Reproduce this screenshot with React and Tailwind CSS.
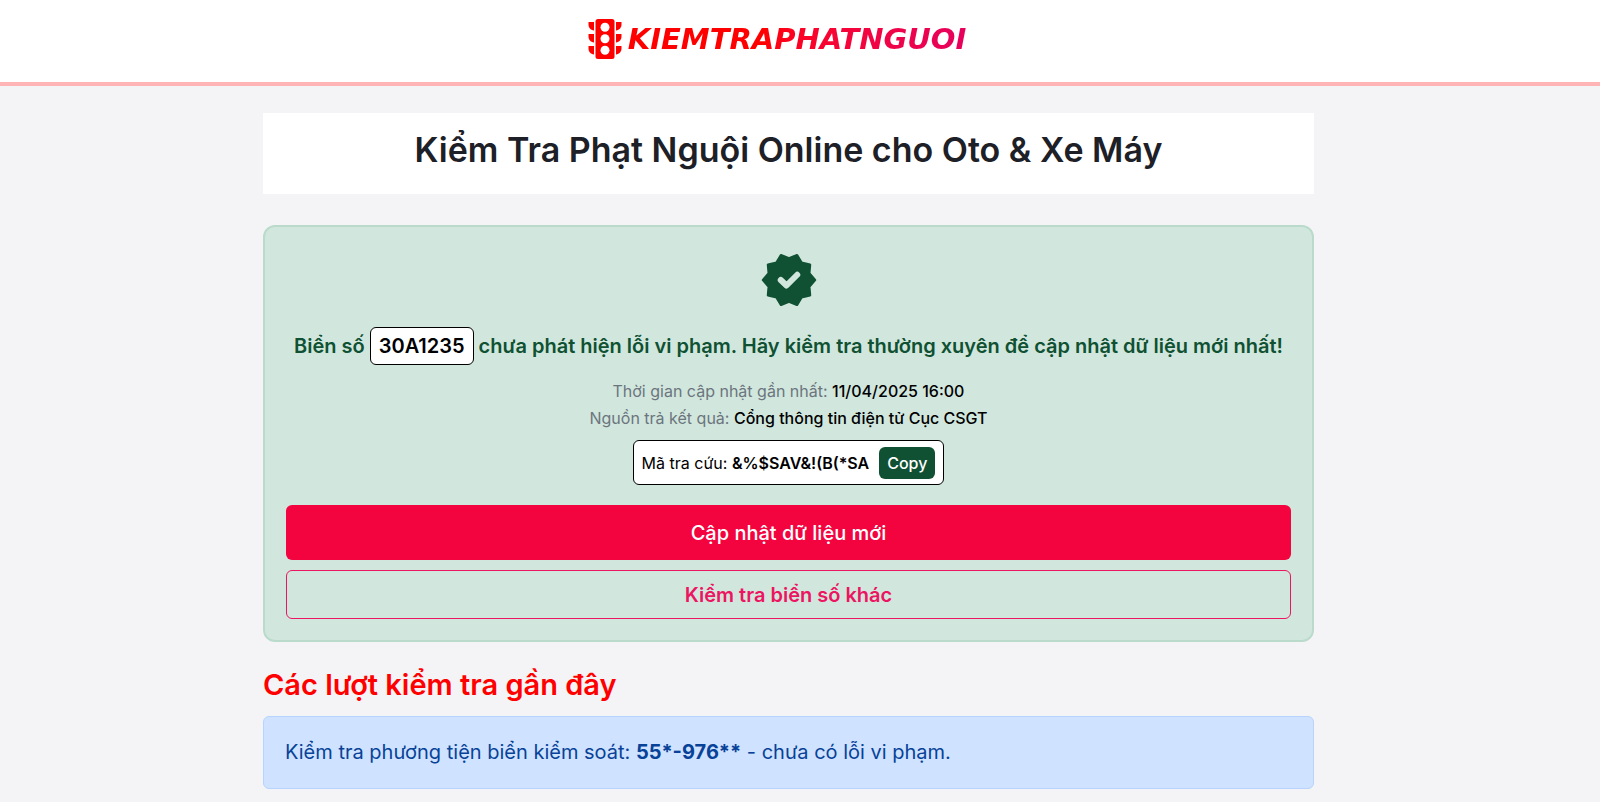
import { useState } from 'react';

const result = {
  plate: '30A1235',
  updatedAt: '11/04/2025 16:00',
  source: 'Cổng thông tin điện tử Cục CSGT',
  code: '&%$SAV&!(B(*SA',
};

const recentChecks = [{ plate: '55*-976**', status: 'chưa có lỗi vi phạm.' }];

function TrafficLight() {
  return (
    <svg viewBox="0 0 34 42" className="h-[42px] w-[34px]" aria-hidden="true">
      <g fill="#ff0000">
        <rect x="7.5" y="1" width="19" height="40" rx="2.5" />
        <path d="M.5 4H6v8.500C2.500 12 .5 9.500.5 6.500zM.5 16H6v8.500C2.500 24 .5 21.500.5 18.500zM.5 28H6v8.500C2.500 36 .5 33.500.5 30.500z" />
        <path d="M33.500 4H28v8.500c3.500-.5 5.500-3 5.500-6zM33.500 16H28v8.500c3.500-.5 5.500-3 5.500-6zM33.500 28H28v8.500c3.500-.5 5.500-3 5.500-6z" />
      </g>
      <g fill="#ffffff">
        <circle cx="17" cy="9.200" r="4.500" />
        <circle cx="17" cy="20.700" r="4.500" />
        <circle cx="17" cy="32.200" r="4.500" />
      </g>
    </svg>
  );
}

function VerifiedBadge() {
  return (
    <svg viewBox="0 0 24 24" className="mx-auto size-[60px]" aria-hidden="true">
      <path
        d="M22.400 12l-2.300-2.700.3-3.400-3.400-.8-1.800-3L12 3.400 8.800 2.100 7 5.100l-3.400.8.3 3.400L1.600 12l2.300 2.700-.3 3.400 3.400.8 1.800 3 3.200-1.300 3.200 1.300 1.800-3 3.400-.8-.3-3.400z"
        fill="#0f5132"
        stroke="#0f5132"
        strokeWidth="1"
        strokeLinejoin="round"
      />
      <path
        d="M8.700 12l2.300 2.200 4.300-4.300"
        fill="none"
        stroke="#d1e7dd"
        strokeWidth="2.400"
        strokeLinecap="round"
        strokeLinejoin="round"
      />
    </svg>
  );
}

function ResultCard() {
  const [copied, setCopied] = useState(false);

  const handleCopy = () => {
    navigator.clipboard?.writeText(result.code);
    setCopied(true);
  };

  return (
    <section className="mt-[31px] rounded-xl border-2 border-[#badbcc] bg-[#d1e7dd] px-[21px] pt-[23px] pb-[21px] text-center">
      <VerifiedBadge />

      <p className="mt-4 text-[20px] leading-[40px] font-semibold text-[#0f5132]">
        Biển số{' '}
        <span className="inline-block rounded-md border border-black bg-white px-2 leading-9 text-black">
          {result.plate}
        </span>{' '}
        chưa phát hiện lỗi vi phạm. Hãy kiểm tra thường xuyên để cập nhật dữ liệu mới nhất!
      </p>

      <div className="mt-3 text-[16px] leading-[27px] text-[#6c757d]">
        <p>
          Thời gian cập nhật gần nhất: <span className="font-medium text-black">{result.updatedAt}</span>
        </p>
        <p>
          Nguồn trả kết quả: <span className="font-medium text-black">{result.source}</span>
        </p>
      </div>

      <div className="mt-2 inline-flex h-[45px] items-center rounded-md border border-black bg-white px-2 text-[16px] text-black">
        <span>
          Mã tra cứu: <strong className="font-semibold">{result.code}</strong>
        </span>
        <button
          type="button"
          onClick={handleCopy}
          className="ml-[10px] h-8 rounded-md bg-[#0f5132] px-2 font-medium text-white"
        >
          {copied ? 'Copied' : 'Copy'}
        </button>
      </div>

      <div className="mt-5 flex flex-col gap-[10px] text-[20px]">
        <button type="button" className="h-[55px] rounded-md bg-[#f3043f] font-medium text-white">
          Cập nhật dữ liệu mới
        </button>
        <button type="button" className="h-[49px] rounded-md border border-[#ec1561] font-semibold text-[#ec1561]">
          Kiểm tra biển số khác
        </button>
      </div>
    </section>
  );
}

export default function App() {
  return (
    <div className="min-h-screen bg-[#f4f4f7] font-['Inter',sans-serif]">
      <header className="flex h-[86px] justify-center border-b-4 border-[#ffb5b5] bg-white pt-[18px] pr-[46px]">
        <a href="#" className="flex h-[42px] items-center gap-[6px]">
          <TrafficLight />
          <span className="bg-linear-to-r from-[#ff0000] from-40% to-[#e6005c] bg-clip-text font-['DejaVu_Sans',sans-serif] text-[29px] leading-[42px] font-bold text-transparent italic">
            KIEMTRAPHATNGUOI
          </span>
        </a>
      </header>

      <div className="pt-[27px] pr-[23px] pb-3">
        <main className="mx-auto max-w-[1051px]">
          <h1 className="bg-white pt-3 pb-5 text-center text-[34px] leading-[49px] font-semibold text-[#1d2026]">
            Kiểm Tra Phạt Nguội Online cho Oto &amp; Xe Máy
          </h1>

          <ResultCard />

          <h2 className="mt-6 text-[29px] leading-[38px] font-semibold text-[#ff0000]">Các lượt kiểm tra gần đây</h2>
          <ul className="mt-3">
            {recentChecks.map((check) => (
              <li
                key={check.plate}
                className="rounded-md border border-[#b6d4fe] bg-[#cfe2ff] px-[21px] py-[21px] text-[20px] leading-[29px] text-[#084298]"
              >
                Kiểm tra phương tiện biển kiểm soát: <strong className="font-bold">{check.plate}</strong> - {check.status}
              </li>
            ))}
          </ul>
        </main>
      </div>
    </div>
  );
}
